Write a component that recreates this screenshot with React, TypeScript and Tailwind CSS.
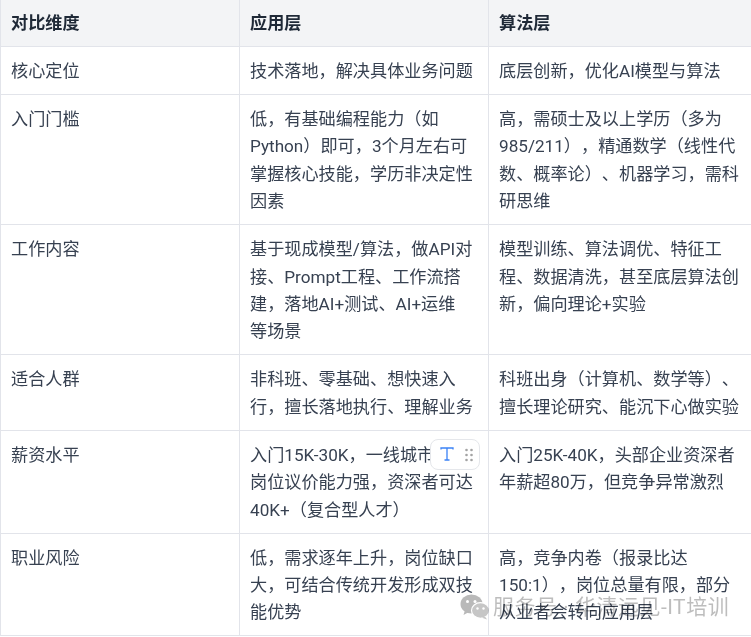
const rows = [
  ["核心定位", "技术落地，解决具体业务问题", "底层创新，优化AI模型与算法"],
  [
    "入门门槛",
    "低，有基础编程能力（如Python）即可，3个月左右可掌握核心技能，学历非决定性因素",
    "高，需硕士及以上学历（多为985/211），精通数学（线性代数、概率论）、机器学习，需科研思维",
  ],
  [
    "工作内容",
    "基于现成模型/算法，做API对接、Prompt工程、工作流搭建，落地AI+测试、AI+运维\n等场景",
    "模型训练、算法调优、特征工程、数据清洗，甚至底层算法创新，偏向理论+实验",
  ],
  [
    "适合人群",
    "非科班、零基础、想快速入行，擅长落地执行、理解业务",
    "科班出身（计算机、数学等）、擅长理论研究、能沉下心做实验",
  ],
  [
    "薪资水平",
    "入门15K-30K，一线城市\n岗位议价能力强，资深者可达40K+（复合型人才）",
    "入门25K-40K，头部企业资深者年薪超80万，但竞争异常激烈",
  ],
  [
    "职业风险",
    "低，需求逐年上升，岗位缺口大，可结合传统开发形成双技能优势",
    "高，竞争内卷（报录比达150:1），岗位总量有限，部分从业者会转向应用层",
  ],
];

const WeChat = () => (
  <svg width="30" height="26" viewBox="0 0 30 26" fill="#b9b9b9">
    <ellipse cx="11.5" cy="10" rx="11" ry="9.5" />
    <path d="M5 16l-1.5 5 5.5-3z" />
    <ellipse cx="20.5" cy="16.5" rx="9" ry="7.8" fill="#c6c6c6" stroke="#fff" strokeWidth="1.2" />
    <path d="M25 22.5l2 3-5-1.8z" fill="#c6c6c6" />
    <circle cx="7.5" cy="7.5" r="1.5" fill="#fff" />
    <circle cx="15" cy="7.5" r="1.5" fill="#fff" />
    <circle cx="17.5" cy="14.5" r="1.2" fill="#fff" />
    <circle cx="23.5" cy="14.5" r="1.2" fill="#fff" />
  </svg>
);

export default function App() {
  return (
    <div className="relative h-[637px] w-[751px] overflow-hidden bg-white font-['Roboto','Noto_Sans_CJK_SC',sans-serif] text-[17.15px] leading-[27.4px] text-[#374151] [text-spacing-trim:space-all]">
      <table className="-mt-[2px] w-[763px] table-fixed border-collapse">
        <colgroup>
          <col className="w-[239px]" />
          <col className="w-[249px]" />
          <col className="w-[275px]" />
        </colgroup>
        <thead>
          <tr className="bg-[#f3f4f6] text-[#1f2937]">
            <th className="border border-[#e2e4ea] px-[10px] pt-[11px] pb-[8.6px] text-left font-bold">对比维度</th>
            <th className="border border-[#e2e4ea] px-[10px] pt-[11px] pb-[8.6px] text-left font-bold">应用层</th>
            <th className="border border-[#e2e4ea] px-[10px] pt-[11px] pb-[8.6px] text-left font-bold">算法层</th>
          </tr>
        </thead>
        <tbody>
          {rows.map((row) => (
            <tr key={row[0]}>
              <td className="border border-[#e2e4ea] px-[10px] pt-[11px] pb-[8.6px] align-top">{row[0]}</td>
              <td className="border border-[#e2e4ea] px-[10px] pt-[11px] pb-[8.6px] align-top whitespace-pre-line">{row[1]}</td>
              <td className="border border-[#e2e4ea] pt-[11px] pr-[18px] pb-[8.6px] pl-[10px] align-top">{row[2]}</td>
            </tr>
          ))}
        </tbody>
      </table>

      <div className="absolute top-[439px] left-[430px] flex h-[31px] w-[50px] items-center gap-[10px] rounded-lg border border-[#e5e7eb] bg-white pl-2">
        <svg width="16" height="16" viewBox="0 0 16 16" fill="none" stroke="#3b82f6" strokeWidth="1.3" className="-mt-px">
          <path d="M2 3.5V2h12v1.5M8 2v12M5.5 14h5" />
        </svg>
        <svg width="8" height="14" viewBox="0 0 8 14" fill="#a3a3a3">
          <circle cx="1.5" cy="2" r="1.3" />
          <circle cx="6.5" cy="2" r="1.3" />
          <circle cx="1.5" cy="7" r="1.3" />
          <circle cx="6.5" cy="7" r="1.3" />
          <circle cx="1.5" cy="12" r="1.3" />
          <circle cx="6.5" cy="12" r="1.3" />
        </svg>
      </div>

      <div className="absolute top-[593px] left-[460px] flex items-center gap-[3px] text-[21px] leading-[28px] tracking-[0.5px] whitespace-nowrap text-[#bdbdbd] mix-blend-multiply">
        <WeChat />
        <span>服务号 · 华清远见-IT培训</span>
      </div>
    </div>
  );
}
